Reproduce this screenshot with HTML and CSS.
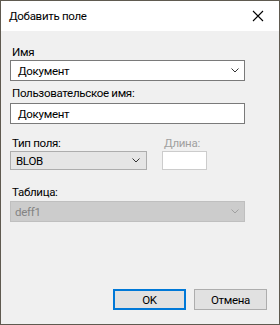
FILE: index.html
```html
<!DOCTYPE html>
<html>
<head>
<meta charset="utf-8">
<link rel="stylesheet" href="styles.css">
</head>
<body>
<div class="window">
  <div class="titlebar">
    <span class="title">Добавить поле</span>
    <svg class="close" width="12" height="12" viewBox="0 0 12 12"><path d="M1 1L11 11M11 1L1 11" stroke="#000" stroke-width="1.1" fill="none"/></svg>
  </div>
  <div class="content">
    <div class="label l1">Имя</div>
    <div class="combo wide name">
      <span class="val">Документ</span>
      <svg class="arrow" width="8" height="5" viewBox="0 0 8 5"><path d="M0.5 0.5L4 4L7.5 0.5" stroke="#333" stroke-width="1" fill="none"/></svg>
    </div>
    <div class="label l2">Пользовательское имя:</div>
    <div class="textbox wide"><span class="val">Документ</span></div>
    <div class="row">
      <div class="col">
        <div class="label">Тип поля:</div>
        <div class="combo type">
          <span class="val">BLOB</span>
          <svg class="arrow" width="8" height="5" viewBox="0 0 8 5"><path d="M0.5 0.5L4 4L7.5 0.5" stroke="#333" stroke-width="1" fill="none"/></svg>
        </div>
      </div>
      <div class="col">
        <div class="label disabled">Длина:</div>
        <div class="textbox len"></div>
      </div>
    </div>
    <div class="label l4">Таблица:</div>
    <div class="combo wide off">
      <span class="val">deff1</span>
      <svg class="arrow" width="8" height="5" viewBox="0 0 8 5"><path d="M0.5 0.5L4 4L7.5 0.5" stroke="#a0a0a0" stroke-width="1" fill="none"/></svg>
    </div>
    <div class="spacer"></div>
    <div class="buttons">
      <div class="btn ok">OK</div>
      <div class="btn">Отмена</div>
    </div>
  </div>
</div>
</body>
</html>
```
FILE: styles.css
```css
html, body {
  margin: 0;
  padding: 0;
  background: #f0f0f0;
}
body {
  font-family: Roboto, "Noto Sans", sans-serif;
  font-size: 11.5px;
  letter-spacing: -0.3px;
  color: #000;
}
.window {
  box-sizing: border-box;
  width: 280px;
  height: 325px;
  border: 1px solid #5f5a50;
  background: #f0f0f0;
  display: flex;
  flex-direction: column;
}
.titlebar {
  height: 30px;
  background: #fff;
  display: flex;
  align-items: center;
  justify-content: space-between;
  padding: 0 15px 0 8px;
  flex: none;
}
.title {
  margin-top: -1px;
}
.close {
  display: block;
}
.content {
  flex: 1;
  display: flex;
  flex-direction: column;
  padding: 0 34px 14px 9px;
}
.label {
  height: 16px;
  line-height: 16px;
  white-space: nowrap;
  padding-left: 2px;
}
.l1 { margin-top: 13px; margin-bottom: 0; }
.l2 { margin-top: 4px; margin-bottom: 2px; }
.l4 { margin-top: 14px; margin-bottom: 1px; }
.disabled { color: #a0a0a0; }
.combo, .textbox {
  box-sizing: border-box;
  height: 21px;
  border: 1px solid #7a7a7a;
  background: #fff;
  display: flex;
  align-items: center;
  padding: 0 5px 0 7px;
  justify-content: space-between;
}
.val { line-height: 16px; }
.row {
  display: flex;
  gap: 15px;
  margin-top: 11px;
}
.combo.type {
  width: 137px;
  height: 19px;
  background: #e5e5e5;
  border-color: #adadad;
  padding: 0 6px 0 5px;
}
.textbox.len {
  width: 45px;
  height: 19px;
  border-color: #cccccc;
}
.combo.off {
  background: #cccccc;
  border-color: #bfbfbf;
  color: #838383;
  padding-left: 4px;
}
.spacer { flex: 1; }
.buttons {
  display: flex;
  justify-content: flex-end;
  gap: 8px;
  margin-right: -22px;
}
.btn {
  box-sizing: border-box;
  width: 73px;
  height: 21px;
  border: 1px solid #adadad;
  background: #e1e1e1;
  display: flex;
  align-items: center;
  justify-content: center;
}
.btn.ok {
  border: 2px solid #0078d7;
}
```
